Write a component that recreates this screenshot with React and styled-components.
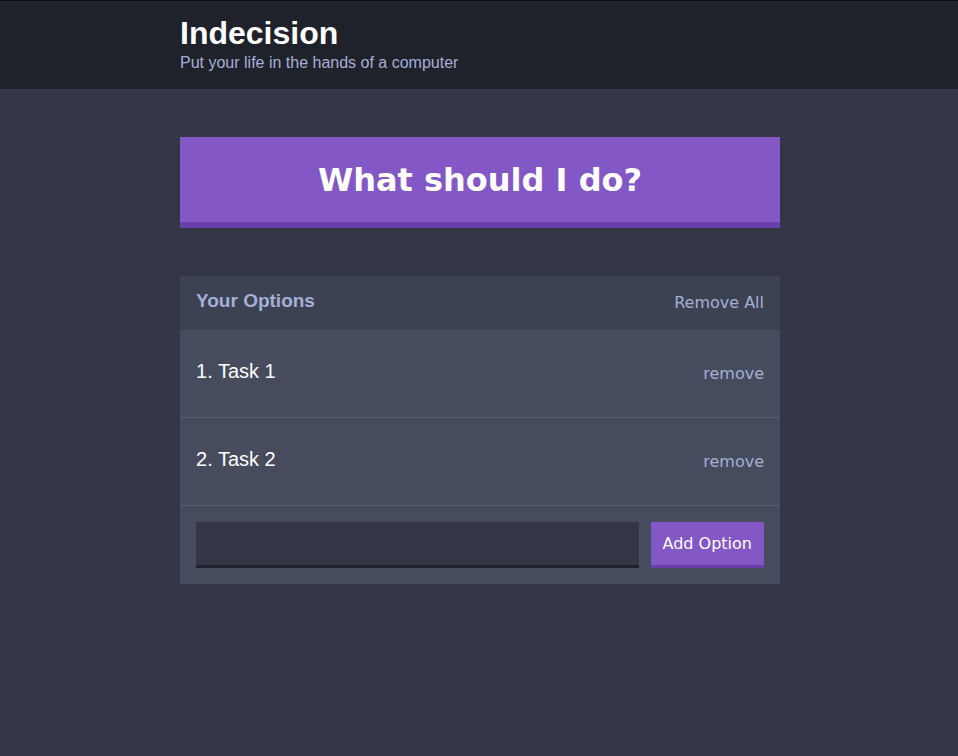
import React, { useState } from 'react';
import styled, { createGlobalStyle } from 'styled-components';

const GlobalStyle = createGlobalStyle`
  html, body {
    margin: 0;
    padding: 0;
    min-height: 100%;
  }
  body {
    background: #333745;
    font-family: "Liberation Sans", Arial, sans-serif;
    color: #fff;
  }
  * {
    box-sizing: border-box;
  }
`;

export default function App() {
  const [options, setOptions] = useState(['Task 1', 'Task 2']);

  return (
    <Page>
      <GlobalStyle />
      <Header>
        <Container>
          <Title>Indecision</Title>
          <Subtitle>Put your life in the hands of a computer</Subtitle>
        </Container>
      </Header>
      <Container>
        <BigButton>What should I do?</BigButton>
        <Widget>
          <WidgetHeader>
            <WidgetTitle>Your Options</WidgetTitle>
            <LinkButton $offset={3} onClick={() => setOptions([])}>
              Remove All
            </LinkButton>
          </WidgetHeader>
          {options.map((option, index) => (
            <Option key={index}>
              <OptionText>
                {index + 1}. {option}
              </OptionText>
              <LinkButton
                onClick={() => setOptions(options.filter((o) => o !== option))}
              >
                remove
              </LinkButton>
            </Option>
          ))}
          <AddOption onSubmit={(e) => e.preventDefault()}>
            <Input type="text" name="option" />
            <Button>Add Option</Button>
          </AddOption>
        </Widget>
      </Container>
    </Page>
  );
}

const Page = styled.div`
  min-height: 756px;
  background: #333745;
`;

const Header = styled.header`
  background: #20222b;
  border-top: 1px solid #0c0d10;
  padding: 14px 0 16px;
  margin-bottom: 48px;
`;

const Container = styled.div`
  max-width: 632px;
  margin: 0 auto;
  padding: 0 15px 0 17px;
`;

const Title = styled.h1`
  margin: 0 0 1px;
  font-size: 32px;
  line-height: 37px;
  font-weight: bold;
  color: #fff;
`;

const Subtitle = styled.h2`
  margin: 0;
  font-size: 16px;
  line-height: 20px;
  font-weight: 500;
  color: #a5afd7;
`;

const BigButton = styled.button`
  display: block;
  width: 100%;
  background: #8357c5;
  border: none;
  border-bottom: 6px solid #6a3fab;
  color: #fff;
  font-family: "DejaVu Sans", sans-serif;
  font-weight: bold;
  font-size: 32px;
  line-height: 36px;
  padding: 25px 24px 24px;
  margin: 0 0 48px;
  cursor: pointer;
`;

const Widget = styled.div`
  background: #464b5e;
  margin-bottom: 48px;
`;

const WidgetHeader = styled.div`
  background: #3c4251;
  display: flex;
  justify-content: space-between;
  align-items: center;
  height: 54px;
  padding: 0 16px 4px;
`;

const WidgetTitle = styled.h3`
  margin: 0;
  font-size: 19px;
  font-weight: bold;
  color: #a5afd7;
`;

const LinkButton = styled.button`
  background: none;
  border: none;
  padding: 0;
  color: #a5afd7;
  font-family: "DejaVu Sans", sans-serif;
  font-size: 16px;
  cursor: pointer;
  margin-top: ${(p) => p.$offset || 0}px;
`;

const Option = styled.div`
  display: flex;
  justify-content: space-between;
  align-items: center;
  height: 88px;
  padding: 0 16px;
  border-bottom: 1px solid #596075;
`;

const OptionText = styled.p`
  margin: 0 0 4px;
  color: #fff;
  font-size: 20px;
  font-weight: 500;
`;

const AddOption = styled.form`
  display: flex;
  padding: 16px;
`;

const Input = styled.input`
  flex-grow: 1;
  height: 46px;
  background: #333745;
  border: none;
  border-bottom: 3px solid #20222b;
  color: #a5afd7;
  padding: 8px;
  margin-right: 12px;
  outline: none;
`;

const Button = styled.button`
  background: #8357c5;
  border: none;
  border-bottom: 3px solid #6a3fab;
  color: #fff;
  font-family: "DejaVu Sans", sans-serif;
  font-size: 16px;
  font-weight: 500;
  padding: 0 12px;
  height: 46px;
  cursor: pointer;
`;
